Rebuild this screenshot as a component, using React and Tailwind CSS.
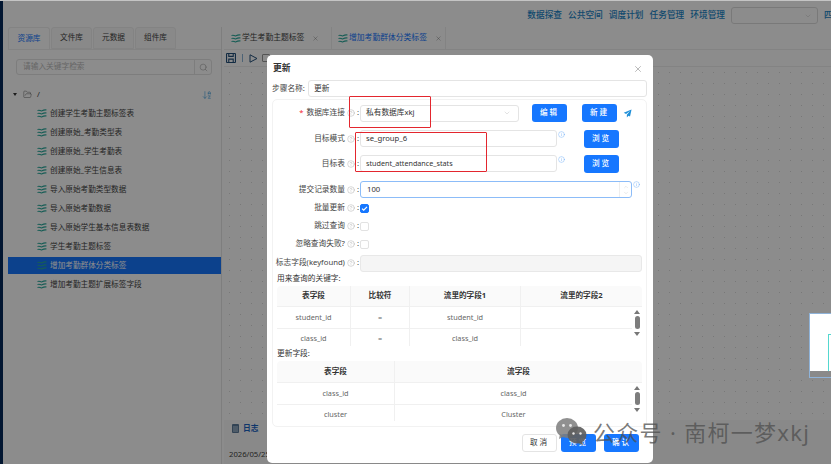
import React from "react";
import { ArrowDownAZ, ChevronDown, ChevronUp, CircleHelp, FolderOpen, Info, Search, X } from "lucide-react";

const font = { fontFamily: '"Noto Sans", "Noto Sans CJK SC", sans-serif' };

const treeItems = [
  "创建学生考勤主题标签表",
  "创建原始_考勤类型表",
  "创建原始_学生考勤表",
  "创建原始_学生信息表",
  "导入原始考勤类型数据",
  "导入原始考勤数据",
  "导入原始学生基本信息表数据",
  "学生考勤主题标签",
  "增加考勤群体分类标签",
  "增加考勤主题扩展标签字段",
];

const LayerIcon = ({ className = "" }) => (
  <svg width="10" height="9" viewBox="0 0 10 9" fill="none" stroke="#2ba99c" strokeWidth="1.1" className={className}>
    <path d="M0.5 1.6c2-1.4 3 1 4.5.2S7.800.6 9.500 1" />
    <path d="M0.500 4.600c2-1.400 3 1 4.500.2s2.800-1.200 4.500-.8" />
    <path d="M0.500 7.600c2-1.400 3 1 4.500.2s2.800-1.200 4.500-.8" />
  </svg>
);

const Tip = () => <CircleHelp size={8} strokeWidth={1} className="text-[#8c8c8c] ml-[2px] shrink-0" />;

const BlueBtn = ({ children, className = "" }) => (
  <button className={`w-[35px] h-[18px] rounded-[3px] bg-[#1677ff] text-white text-[7.6px] tracking-[2px] font-medium shrink-0 ${className}`}>
    {children}
  </button>
);

const Input = ({ children, className = "" }) => (
  <div className={`h-[17px] border border-[#e4e4e4] rounded-[3px] bg-white flex items-center px-[5px] text-[7.7px] text-[#333] ${className}`}>
    {children}
  </div>
);

const FormLabel = ({ children }) => (
  <div className="w-[82px] flex items-center justify-end text-[7.700px] text-[#444] whitespace-nowrap shrink-0">
    {children}
    <Tip />
    <span className="ml-[2px]">:</span>
  </div>
);

const Check = ({ on }) => (
  <div className={`w-[9px] h-[9px] rounded-[2px] border flex items-center justify-center ${on ? "bg-[#1677ff] border-[#1677ff]" : "bg-white border-[#e2e2e2]"}`}>
    {on && (
      <svg width="7" height="7" viewBox="0 0 7 7" fill="none" stroke="white" strokeWidth="1.2">
        <path d="M1 3.600l1.700 1.600L6 1.800" />
      </svg>
    )}
  </div>
);

const ScrollBar = () => (
  <div className="w-[10px] flex flex-col items-center shrink-0 pt-[3px]">
    <div className="w-0 h-0 border-x-[3px] border-x-transparent border-b-[4px] border-b-[#777]" />
    <div className="w-[5px] h-[13px] rounded-full bg-[#7d7d7d] mt-[2px]" />
    <div className="w-0 h-0 border-x-[3px] border-x-transparent border-t-[4px] border-t-[#777] mt-[3px]" />
  </div>
);

const Cell = ({ children, head, className = "" }) => (
  <div
    className={`flex items-center justify-center border-r border-[#f0f0f0] shrink-0 ${
      head ? "font-bold text-[#333] text-[7.6px]" : "text-[#666] text-[7.3px]"
    } ${className}`}
  >
    {children}
  </div>
);

const KeyTable = () => (
  <div className="h-[60px] overflow-hidden">
    <div className="flex h-[21px] bg-[#fafafa] rounded-t-[4px] border-b border-[#f0f0f0]">
      <Cell head className="w-[74px]">表字段</Cell>
      <Cell head className="w-[59px]">比较符</Cell>
      <Cell head className="w-[111px]">流里的字段1</Cell>
      <Cell head className="flex-1 border-r-0">流里的字段2</Cell>
    </div>
    <div className="flex">
      <div className="w-[356px]">
        {[["student_id", "student_id"], ["class_id", "class_id"]].map(([a, b]) => (
          <div key={a} className="flex h-[21.500px] border-b border-[#f0f0f0]">
            <Cell className="w-[74px]">{a}</Cell>
            <Cell className="w-[59px]">=</Cell>
            <Cell className="w-[111px]">{b}</Cell>
            <div className="flex-1" />
          </div>
        ))}
      </div>
      <ScrollBar />
    </div>
  </div>
);

const UpdateTable = () => (
  <div className="h-[60px] overflow-hidden">
    <div className="flex h-[22px] bg-[#fafafa] rounded-t-[4px] border-b border-[#f0f0f0]">
      <Cell head className="w-[118px]">表字段</Cell>
      <Cell head className="flex-1 border-r-0">流字段</Cell>
    </div>
    <div className="flex">
      <div className="w-[356px]">
        {[["class_id", "class_id"], ["cluster", "Cluster"]].map(([a, b]) => (
          <div key={a} className="flex h-[21.500px] border-b border-[#f0f0f0]">
            <Cell className="w-[118px]">{a}</Cell>
            <div className="flex-1 flex items-center justify-center text-[7.3px] text-[#666]">{b}</div>
          </div>
        ))}
      </div>
      <ScrollBar />
    </div>
  </div>
);

const Modal = () => (
  <div className="absolute left-[267px] top-[55px] w-[386px] h-[408px] bg-white rounded-[5px] z-20 px-[5px]">
    <div className="h-[25px] flex items-center justify-between pr-[5px] pl-px pt-[2px]">
      <span className="text-[8.8px] font-bold text-[#333]">更新</span>
      <X size={10} strokeWidth={1.2} className="text-[#777]" />
    </div>
    <div className="flex items-center h-[17px]">
      <span className="w-[36px] text-[7.7px] text-[#444] whitespace-nowrap">步骤名称:</span>
      <Input className="w-[339px]">更新</Input>
    </div>
    <div className="mt-[2px] w-[375px] h-[328px] border border-[#f2f2f2] rounded-[5px] pt-[4px] px-[4px]">
      <div className="flex items-center h-[18px]">
        <FormLabel>
          <span className="text-[#f5222d] mr-[3px]">*</span>数据库连接
        </FormLabel>
        <Input className="w-[159px] justify-between ml-px">
          <span>私有数据库xkj</span>
          <ChevronDown size={8} strokeWidth={1} className="text-[#aaa] mr-[2px]" />
        </Input>
        <BlueBtn className="ml-[13px]">编辑</BlueBtn>
        <BlueBtn className="ml-[15px]">新建</BlueBtn>
        <svg width="9" height="9" viewBox="0 0 10 10" className="ml-[6px]" fill="#1f8fd8">
          <path d="M9.500.5L.800 4.300l2.600 1.200L8 2 4.300 6.400v3l1.700-2 1.800 1z" />
        </svg>
      </div>
      <div className="flex mt-[8px] h-[18px]">
        <FormLabel>目标模式</FormLabel>
        <Input className="w-[197px] ml-px">se_group_6</Input>
        <Info size={7} strokeWidth={1.2} className="text-[#4a9bf5] ml-px mt-px" />
        <BlueBtn className="ml-[19px]">浏览</BlueBtn>
      </div>
      <div className="flex mt-[7px] h-[18px]">
        <FormLabel>目标表</FormLabel>
        <Input className="w-[197px] ml-px !text-[7.2px]">student_attendance_stats</Input>
        <Info size={7} strokeWidth={1.2} className="text-[#4a9bf5] ml-px mt-px" />
        <BlueBtn className="ml-[19px]">浏览</BlueBtn>
      </div>
      <div className="flex mt-[8px] h-[18px]">
        <FormLabel>提交记录数量</FormLabel>
        <div className="w-[272px] ml-px h-[17px] border border-[#8cbcf8] rounded-[3px] flex items-center justify-between pl-[6px] text-[7.700px] text-[#333]">
          100
          <div className="w-[12px] h-full border-l border-[#eee] flex flex-col items-center justify-center text-[#aaa]">
            <ChevronUp size={6} strokeWidth={1} />
            <ChevronDown size={6} strokeWidth={1} />
          </div>
        </div>
        <Info size={7} strokeWidth={1.2} className="text-[#4a9bf5] ml-[1px]" />
      </div>
      <div className="flex items-center h-[18px]">
        <FormLabel>批量更新</FormLabel>
        <div className="ml-px"><Check on /></div>
      </div>
      <div className="flex items-center h-[18px]">
        <FormLabel>跳过查询</FormLabel>
        <div className="ml-px"><Check /></div>
      </div>
      <div className="flex items-center h-[18px]">
        <FormLabel>忽略查询失败?</FormLabel>
        <div className="ml-px"><Check /></div>
      </div>
      <div className="flex items-center h-[18px] mt-px">
        <FormLabel>标志字段(keyfound)</FormLabel>
        <div className="w-[284px] ml-px h-[17px] rounded-[3px] bg-[#f5f5f5] border border-[#e8e8e8]" />
      </div>
      <div className="h-[14px] flex items-center text-[7.700px] text-[#333]">用来查询的关键字:</div>
      <KeyTable />
      <div className="h-[15px] flex items-center text-[7.700px] text-[#333]">更新字段:</div>
      <UpdateTable />
    </div>
    <div className="flex justify-end gap-[4px] mt-[7px] pr-[9px]">
      <button className="w-[35px] h-[18px] rounded-[3px] border border-[#e4e4e4] bg-white text-[7.600px] tracking-[2px] text-[#333]">
        取消
      </button>
      <BlueBtn>预览</BlueBtn>
      <BlueBtn className="ml-[4px]">确认</BlueBtn>
    </div>
  </div>
);

const RedBox = ({ className }) => (
  <div className={`absolute z-30 border-[1.500px] border-[#e3262e] rounded-[1px] ${className}`} />
);

const App = () => {
  return (
    <div style={font} className="relative w-[831px] h-[464px] overflow-hidden bg-white flex">
      <div className="w-[3px] bg-[#05285a] z-10 shrink-0" />
      <div className="flex-1 flex flex-col pl-[5px]">
        <header className="h-[27px] flex items-center justify-end gap-[6px] pt-[4px] text-[8.700px] text-[#1b86c8] font-medium shrink-0">
          <span>数据探查</span>
          <span>公共空间</span>
          <span>调度计划</span>
          <span>任务管理</span>
          <span>环境管理</span>
          <div className="w-[87px] h-[17px] border border-[#ddd] rounded-[3px] flex items-center justify-end pr-[5px]">
            <ChevronDown size={8} strokeWidth={1} className="text-[#aaa]" />
          </div>
          <span className="w-[7px] overflow-hidden">四</span>
        </header>
        <div className="flex-1 flex min-h-0">
          <aside className="w-[214px] border-r border-[#e6e6e6] shrink-0">
            <div className="flex gap-px h-[23px] border-b border-[#eee] text-[7.700px] text-[#444]">
              <div className="w-[42px] flex items-center justify-center border border-b-0 border-[#eee] rounded-t-[3px] text-[#1677ff]">资源库</div>
              <div className="w-[41px] flex items-center justify-center bg-[#fafafa] border border-[#eee] rounded-t-[3px]">文件库</div>
              <div className="w-[41px] flex items-center justify-center bg-[#fafafa] border border-[#eee] rounded-t-[3px]">元数据</div>
              <div className="w-[41px] flex items-center justify-center bg-[#fafafa] border border-[#eee] rounded-t-[3px]">组件库</div>
            </div>
            <div className="mx-[8px] mt-[9px] w-[196px] h-[16px] border border-[#e4e4e4] rounded-[3px] flex items-center justify-between text-[7.700px] text-[#bbb]">
              <span className="pl-[6px]">请输入关键字检索</span>
              <div className="w-[17px] h-full border-l border-[#e4e4e4] flex items-center justify-center">
                <Search size={9} strokeWidth={1.2} className="text-[#888]" />
              </div>
            </div>
            <div className="flex items-center h-[19px] mt-[10px] pl-[5px] pr-[9px] text-[7.700px] text-[#444]">
              <div className="w-0 h-0 border-x-[2px] border-x-transparent border-t-[3px] border-t-[#333]" />
              <FolderOpen size={9} strokeWidth={1} className="ml-[6px] text-[#333]" />
              <span className="ml-[5px]">/</span>
              <ArrowDownAZ size={10} strokeWidth={1.2} className="ml-auto text-[#1f8fd8]" />
            </div>
            {treeItems.map((item, i) => (
              <div
                key={item}
                className={`flex items-center pl-[29px] text-[7.650px] whitespace-nowrap ${
                  i === 8 ? "bg-[#1677ff] text-white h-[17px] my-px" : "text-[#444] h-[19px]"
                }`}
              >
                <LayerIcon className="mr-[3px] shrink-0" />
                {item}
              </div>
            ))}
          </aside>
          <main className="flex-1 flex flex-col min-w-0 pl-[2px]">
            <div className="flex h-[23px] border-b border-[#eee] text-[7.800px] text-[#444] shrink-0">
              <div className="w-[103px] flex items-center pl-[7px] whitespace-nowrap">
                <LayerIcon className="mr-px shrink-0" />
                学生考勤主题标签
                <X size={7} strokeWidth={1} className="ml-[8px]" />
              </div>
              <div className="w-[115px] ml-[4px] flex items-center pl-[6px] whitespace-nowrap text-[#1677ff] border-x border-[#eee]">
                <LayerIcon className="mr-px shrink-0" />
                增加考勤群体分类标签
                <X size={7} strokeWidth={1} className="ml-[8px] text-[#444]" />
              </div>
            </div>
            <div className="h-[17px] flex items-center pl-[2px] border-b border-[#eee] shrink-0">
              <svg width="10" height="10" viewBox="0 0 9 9" fill="none" stroke="#24507a" strokeWidth="1">
                <rect x="0.500" y="0.500" width="8" height="8" rx="0.500" />
                <path d="M2.500 0.500v2.500h4V0.500M2.500 8.500v-3h4v3" />
              </svg>
              <div className="w-px h-[8px] bg-[#8db4d8] ml-[6px]" />
              <svg width="9" height="9" viewBox="0 0 9 9" fill="none" stroke="#24507a" strokeWidth="1" className="ml-[6px]">
                <path d="M1 .8l7 3.700-7 3.700z" />
              </svg>
              <div className="w-[8px] h-[8px] border border-[#999] rounded-[1px] ml-[4px]" />
            </div>
            <div className="flex-1 bg-[radial-gradient(#dadada_0.6px,transparent_0.7px)] bg-[size:11px_11px]" />
            <div className="h-[44px] bg-[#fafafa] shrink-0 pl-[4px] pt-[3px]">
              <div className="flex items-center text-[7.700px] font-bold text-[#1a63c4] pl-[4px]">
                <svg width="7" height="9" viewBox="0 0 7 9" className="mr-[2px]">
                  <rect width="7" height="9" rx="1" fill="#5b7a99" />
                  <rect x="1" y="2" width="5" height="6" fill="#8fa6bd" />
                </svg>
                <span className="ml-[2px]">日志</span>
              </div>
              <div className="mt-[14px] text-[7.700px] text-[#444] pl-px">2026/05/25</div>
            </div>
          </main>
        </div>
      </div>

      <div className="absolute inset-0 bg-black/45 z-10" />
      <div className="absolute inset-x-0 top-0 h-px bg-[#c4c4c4] z-10" />

      <div className="absolute z-10 left-[809px] top-[313px] w-[22px] h-[65px] bg-white border border-[#8fb3d9] border-r-0 flex flex-col">
        <div className="flex-1 pl-[18px] pt-[20px]">
          <div className="w-[4px] h-[37px] border-l border-t border-[#54d8d0]" />
        </div>
        <div className="h-[8px] bg-[#8a8a8a]" />
      </div>

      <Modal />
      <RedBox className="left-[349px] top-[96px] w-[82px] h-[32px]" />
      <RedBox className="left-[355px] top-[132px] w-[132px] h-[40px]" />

      <div className="absolute z-40 left-[556px] top-[418px] flex items-center pointer-events-none">
        <svg width="31" height="27" viewBox="0 0 31 27">
          <ellipse cx="11" cy="10" rx="11" ry="10" fill="#7c7c7c" fillOpacity="0.85" />
          <path d="M4 16l-1 5 6-3z" fill="#7c7c7c" fillOpacity="0.85" />
          <ellipse cx="21" cy="17" rx="9.500" ry="8.500" fill="#5f5f5f" fillOpacity="0.92" />
          <path d="M26 23l1 4-5-2z" fill="#5f5f5f" fillOpacity="0.92" />
          <circle cx="7.500" cy="7.500" r="1.400" fill="#e8e8e8" />
          <circle cx="14.500" cy="7.500" r="1.400" fill="#e8e8e8" />
          <circle cx="17.500" cy="15.500" r="1.200" fill="#e8e8e8" />
          <circle cx="24.500" cy="15.500" r="1.200" fill="#e8e8e8" />
        </svg>
        <span className="ml-[6px] text-[22px] tracking-[1.300px] leading-none text-[#4f4f4f]/75 whitespace-nowrap">
          公众号 · 南柯一梦xkj
        </span>
      </div>
    </div>
  );
};

export default App;
